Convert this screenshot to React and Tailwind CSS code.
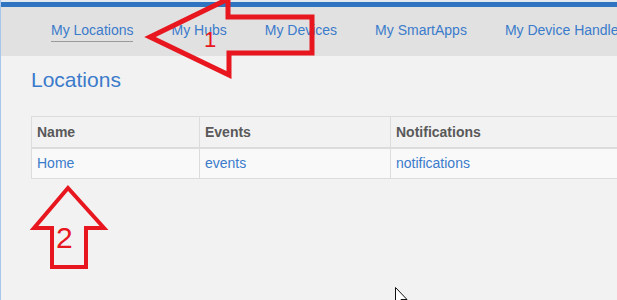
export default function App() {
  const nav = ['My Locations', 'My Hubs', 'My Devices', 'My SmartApps', 'My Device Handlers']

  return (
    <div className="relative h-[300px] w-full overflow-hidden bg-[#f2f2f2] border-l border-[#a7c8ec] font-['Liberation_Sans',Arial,sans-serif]">
      {/* Top bars */}
      <div className="h-[2px] bg-[#e3e9f1]" />
      <div className="h-[5px] bg-[#2f74c0]" />

      {/* Nav */}
      <nav className="h-[49px] bg-[#e1e1e1] pl-[31px] flex whitespace-nowrap">
        {nav.map((item, i) => (
          <div key={i} className="px-[19px] pt-[15px]">
            <span
              className={`block text-[14px] leading-[16px] text-[#3b7bcb] pb-[3px] ${
                i === 0 ? 'border-b border-[#9a9a9a]' : ''
              }`}
            >
              {item}
            </span>
          </div>
        ))}
      </nav>

      {/* Content */}
      <div className="pl-[30px]">
        <h1 className="mt-[12px] mb-[24px] text-[21px] leading-[24px] text-[#3b7bcb]">Locations</h1>

        <table className="w-[700px] border-collapse text-[14px] leading-[16px]">
          <thead>
            <tr className="h-[31px] border-b-2 border-[#dcdcdc]">
              <th className="w-[168px] border border-[#dcdcdc] px-[5px] text-left font-bold text-[#595959]">Name</th>
              <th className="w-[191px] border border-[#dcdcdc] px-[5px] text-left font-bold text-[#595959]">Events</th>
              <th className="border border-[#dcdcdc] px-[5px] text-left font-bold text-[#595959]">Notifications</th>
            </tr>
          </thead>
          <tbody>
            <tr className="h-[31px] bg-[#f9f9f9]">
              <td className="border border-[#dcdcdc] px-[5px] text-[#3b7bcb]">Home</td>
              <td className="border border-[#dcdcdc] px-[5px] text-[#3b7bcb]">events</td>
              <td className="border border-[#dcdcdc] px-[5px] text-[#3b7bcb]">notifications</td>
            </tr>
          </tbody>
        </table>
      </div>

      {/* Red annotation arrows */}
      <svg className="absolute left-[-1px] top-0 pointer-events-none" width="617" height="300" viewBox="0 0 617 300">
        <polygon
          points="150,37 228,-1 228,17 312,17 312,53 229,53 229,75"
          fill="none"
          stroke="#e8161e"
          strokeWidth="5"
          strokeLinejoin="miter"
        />
        <text x="204" y="47" fill="#e8161e" fontSize="22" fontFamily="Liberation Sans, Arial, sans-serif">1</text>

        <polygon
          points="68,188 104,228 86,228 86,267 52,267 52,228 34,228"
          fill="none"
          stroke="#e8161e"
          strokeWidth="4"
          strokeLinejoin="miter"
        />
        <text x="56" y="248" fill="#e8161e" fontSize="30" fontFamily="Liberation Sans, Arial, sans-serif">2</text>

        {/* mouse cursor */}
        <path d="M395.5 287.5 L395.5 304 L399 300.5 L402 307 L404 306 L401 299.5 L407 299.5 Z" fill="#fff" stroke="#111" strokeWidth="1" />
      </svg>
    </div>
  )
}
